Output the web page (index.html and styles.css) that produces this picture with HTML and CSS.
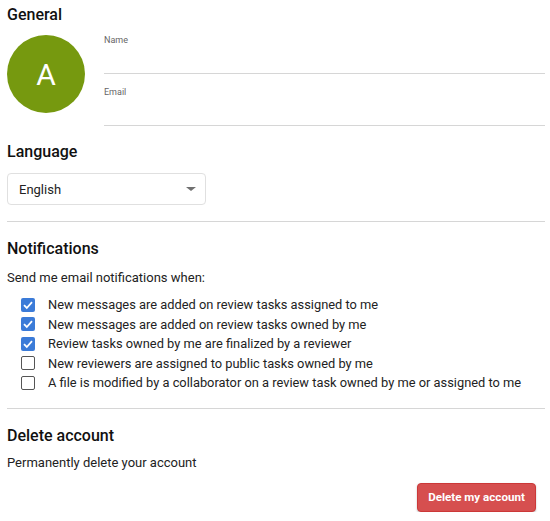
FILE: index.html
```html
<!DOCTYPE html>
<html>
<head>
<meta charset="utf-8">
<link rel="stylesheet" href="styles.css">
</head>
<body>
<div class="page">
  <section class="general">
    <h2 class="heading">General</h2>
    <div class="general-row">
      <div class="avatar">A</div>
      <div class="fields">
        <div class="field">
          <label class="field-label">Name</label>
          <div class="field-input"></div>
        </div>
        <div class="field">
          <label class="field-label">Email</label>
          <div class="field-input"></div>
        </div>
      </div>
    </div>
  </section>
  <section class="language">
    <h2 class="heading">Language</h2>
    <div class="select">
      <span>English</span>
      <span class="caret"></span>
    </div>
  </section>
  <hr class="divider">
  <section class="notifications">
    <h2 class="heading">Notifications</h2>
    <p class="text">Send me email notifications when:</p>
    <ul class="checks">
      <li class="check"><span class="box on"><svg viewBox="0 0 14 14" width="14" height="14"><path d="M3 7.2 L5.8 10 L11 4.2" fill="none" stroke="#fff" stroke-width="1.8"/></svg></span>New messages are added on review tasks assigned to me</li>
      <li class="check"><span class="box on"><svg viewBox="0 0 14 14" width="14" height="14"><path d="M3 7.2 L5.8 10 L11 4.2" fill="none" stroke="#fff" stroke-width="1.8"/></svg></span>New messages are added on review tasks owned by me</li>
      <li class="check"><span class="box on"><svg viewBox="0 0 14 14" width="14" height="14"><path d="M3 7.2 L5.8 10 L11 4.2" fill="none" stroke="#fff" stroke-width="1.8"/></svg></span>Review tasks owned by me are finalized by a reviewer</li>
      <li class="check"><span class="box"></span>New reviewers are assigned to public tasks owned by me</li>
      <li class="check"><span class="box"></span>A file is modified by a collaborator on a review task owned by me or assigned to me</li>
    </ul>
  </section>
  <hr class="divider divider-bottom">
  <section class="delete">
    <h2 class="heading">Delete account</h2>
    <p class="text text-delete">Permanently delete your account</p>
    <div class="actions">
      <button class="btn-danger">Delete my account</button>
    </div>
  </section>
</div>
</body>
</html>
```
FILE: styles.css
```css
html, body { margin: 0; padding: 0; background: #fff; }
body { font-family: Roboto, "Liberation Sans", sans-serif; color: #212121; }
.page { padding: 5px 5px 0 7px; }
.heading { font-size: 16px; font-weight: 500; margin: 0; line-height: 19px; color: #111; }
.general-row { display: flex; gap: 19px; }
.avatar { width: 78px; height: 78px; border-radius: 50%; background: #76990f; color: #fff; font-size: 30px; display: flex; align-items: center; justify-content: center; flex: none; margin-top: 11px; }
.fields { flex: 1; margin-top: -2px; }
.field { height: 52px; display: flex; flex-direction: column; }
.field-label { font-size: 9px; color: #666; margin-top: 13px; line-height: 11px; }
.field-input { margin-top: auto; border-bottom: 1px solid #d6d6d6; }
.language { margin-top: 16px; }
.select { margin-top: 12px; border: 1px solid #e0e0e0; border-radius: 4px; display: flex; align-items: center; justify-content: space-between; padding: 0 9px 0 10px; box-sizing: border-box; width: 199px; height: 32px; font-size: 13px; color: #222; }
.select span:first-child { padding-left: 1px; }
.caret { width: 0; height: 0; border-left: 5px solid transparent; border-right: 5px solid transparent; border-top: 4.5px solid #707070; }
.divider { border: 0; border-top: 1px solid #d6d6d6; margin: 16px 0 0 0; }
.divider-bottom { margin-top: 15px; }
.notifications { margin-top: 17px; }
.text { font-size: 13px; margin: 12px 0 0 0; color: #222; line-height: 15px; }
.text-delete { margin-top: 10px; }
.checks { list-style: none; margin: 10px 0 0 0; padding: 0 0 0 14px; }
.check { display: flex; align-items: center; height: 19.5px; font-size: 12.85px; color: #222; }
.box { width: 14px; height: 14px; box-sizing: border-box; border: 1.5px solid #555; border-radius: 2px; margin-right: 13px; flex: none; display: flex; }
.box.on { background: #3b7bd8; border: 0; }
.delete { margin-top: 17px; }
.actions { display: flex; justify-content: flex-end; margin-top: 13px; padding-right: 9px; }
.btn-danger { background: #d64f4f; color: #fff; border: 1px solid #cc3838; border-radius: 4px; font-family: Roboto, sans-serif; font-weight: 700; font-size: 11.6px; width: 119px; height: 29px; box-shadow: 0 1px 2px rgba(0,0,0,.25); padding: 0; }
```
